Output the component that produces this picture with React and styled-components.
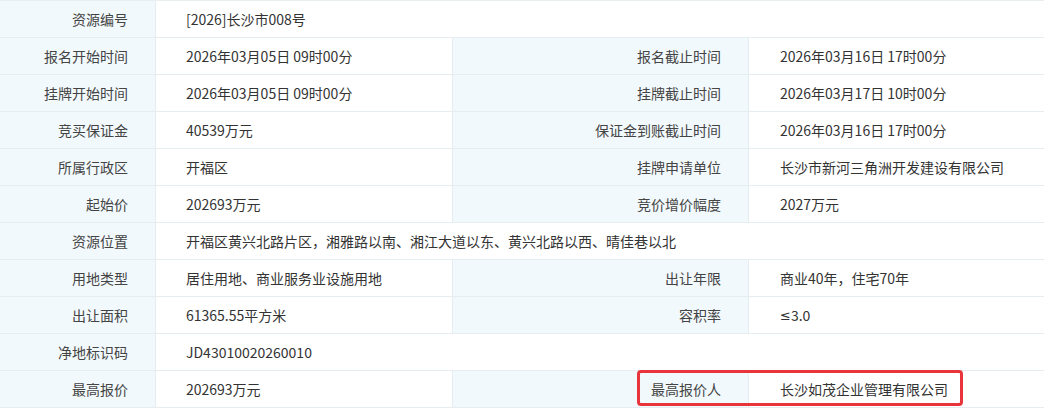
import React from 'react';
import styled, { createGlobalStyle } from 'styled-components';

const GlobalStyle = createGlobalStyle`
  body {
    margin: 0;
    background: #ffffff;
    font-family: "Noto Sans CJK SC", "Noto Sans", sans-serif;
  }
`;

const Wrap = styled.div`
  position: relative;
  width: 1044px;
`;

const Grid = styled.div`
  display: grid;
  grid-template-columns: 156px 297px 296px 1fr;
  border-top: 1px solid #e9eef1;
`;

const Label = styled.div`
  box-sizing: border-box;
  height: 37px;
  padding-right: 27px;
  display: flex;
  align-items: center;
  justify-content: flex-end;
  background: #f2f9fc;
  border-right: 1px solid #e6edf0;
  border-bottom: 1px solid #e6edf0;
  font-size: 14px;
  color: #444444;
`;

const Value = styled.div`
  box-sizing: border-box;
  height: 37px;
  padding-left: ${(p) => (p.$right ? '31px' : '30px')};
  display: flex;
  align-items: center;
  grid-column: ${(p) => (p.$wide ? 'span 3' : 'auto')};
  border-right: ${(p) => (p.$wide || p.$right ? 'none' : '1px solid #e6edf0')};
  border-bottom: 1px solid #e6edf0;
  font-size: 14px;
  color: #333333;
  white-space: pre;
`;

const Sym = styled.span`
  font-family: "DejaVu Sans", sans-serif;
  font-size: 13px;
`;

const Highlight = styled.div`
  position: absolute;
  left: 637px;
  top: 370px;
  width: 326px;
  height: 36px;
  box-sizing: border-box;
  border: 3px solid #e8343b;
  border-radius: 4px;
  pointer-events: none;
`;

const rows = [
  [['资源编号', '[2026]长沙市008号']],
  [['报名开始时间', '2026年03月05日 09时00分'], ['报名截止时间', '2026年03月16日 17时00分']],
  [['挂牌开始时间', '2026年03月05日 09时00分'], ['挂牌截止时间', '2026年03月17日 10时00分']],
  [['竞买保证金', '40539万元'], ['保证金到账截止时间', '2026年03月16日 17时00分']],
  [['所属行政区', '开福区'], ['挂牌申请单位', '长沙市新河三角洲开发建设有限公司']],
  [['起始价', '202693万元'], ['竞价增价幅度', '2027万元']],
  [['资源位置', '开福区黄兴北路片区，湘雅路以南、湘江大道以东、黄兴北路以西、晴佳巷以北']],
  [['用地类型', '居住用地、商业服务业设施用地'], ['出让年限', '商业40年，住宅70年']],
  [['出让面积', '61365.55平方米'], ['容积率', <><Sym>≤</Sym>3.0</>]],
  [['净地标识码', 'JD43010020260010']],
  [['最高报价', '202693万元'], ['最高报价人', '长沙如茂企业管理有限公司']],
];

export default function App() {
  return (
    <Wrap>
      <GlobalStyle />
      <Grid>
        {rows.map((row, i) =>
          row.map(([label, value], j) => (
            <React.Fragment key={`${i}-${j}`}>
              <Label>{label}</Label>
              <Value $wide={row.length === 1} $right={j === 1}>
                {value}
              </Value>
            </React.Fragment>
          ))
        )}
      </Grid>
      <Highlight />
    </Wrap>
  );
}
